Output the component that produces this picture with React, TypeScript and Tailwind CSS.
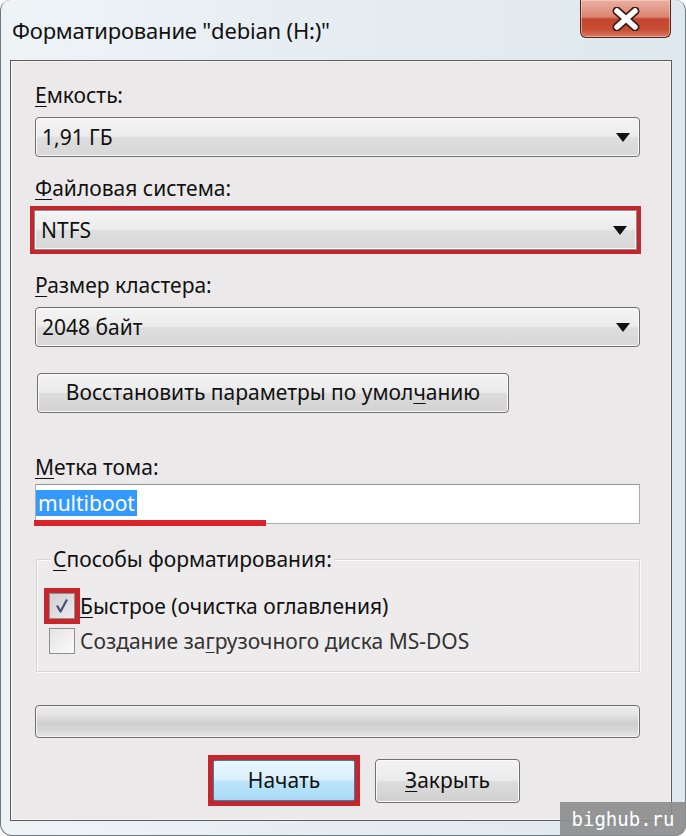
import React from "react";

const U = ({ children }: { children: React.ReactNode }) => (
  <span className="underline decoration-1 underline-offset-[3px]">{children}</span>
);

const Arrow = () => (
  <svg width="14" height="9" viewBox="0 0 14 9" className="shrink-0">
    <path d="M0 0 L14 0 L7 9 Z" fill="#111" />
  </svg>
);

const Combo = ({ text, className = "" }: { text: string; className?: string }) => (
  <div
    className={`flex items-center justify-between h-[40px] pl-[6px] pr-[9px] rounded-[4px] border border-[#6f6f6f] bg-[linear-gradient(#f4f4f4_0%,#ececec_48%,#dedede_52%,#d7d7d7_100%)] shadow-[inset_0_0_0_1px_#fafafa] ${className}`}
  >
    <span className="leading-none">{text}</span>
    <Arrow />
  </div>
);

export default function App() {
  return (
    <div
      className="relative w-[686px] h-[836px] overflow-hidden bg-white text-[#111]"
      style={{ fontFamily: '"Noto Sans", "Open Sans", sans-serif' }}
    >
      {/* window frame */}
      <div className="absolute inset-0 rounded-t-[10px] rounded-b-[12px] border border-[#6c7780] border-t-0 bg-[linear-gradient(90deg,#eef3f6_0%,#e4ecf1_60%,#dfe8ee_100%)]" />
      <div className="relative flex flex-col h-full">
        {/* title bar */}
        <div className="flex items-start h-[60px]">
          <div className="pl-[12px] pt-[15px] text-[22px] leading-[30px] tracking-[-0.2px]">
            Форматирование "debian (H:)"
          </div>
          <div className="ml-auto mr-[15px] w-[91px] h-[38px] rounded-b-[6px] border border-t-0 border-[#4f2820] bg-[linear-gradient(#eab0a2_0%,#dc8672_45%,#c4452d_52%,#c94d35_80%,#dc7a62_100%)] flex items-center justify-center shadow-[inset_0_0_0_1px_rgba(255,220,210,0.5)]">
            <svg width="30" height="24" viewBox="0 0 30 24">
              <path d="M6 4 L24 20 M24 4 L6 20" stroke="#3a1c16" strokeWidth="9" strokeLinecap="round" />
              <path d="M6 4 L24 20 M24 4 L6 20" stroke="#ffffff" strokeWidth="5.5" strokeLinecap="round" />
            </svg>
          </div>
        </div>

        {/* main panel */}
        <div className="ml-[10px] mr-[14px] h-[761px] border border-[#5a5a5a] bg-[#ebe9ea] shadow-[inset_0_0_0_1px_#f7f7f7] flex flex-col pl-[24px] pr-[31px] text-[21px]">
          <div className="mt-[22px] h-[24px] leading-[24px]"><U>Е</U>мкость:</div>
          <Combo text="1,91 ГБ" className="mt-[10px]" />

          <div className="mt-[19px] h-[24px] leading-[24px]"><U>Ф</U>айловая система:</div>
          <div className="mt-[6px] -ml-[5px] -mr-[1px] border-[4px] border-[#c3262c] p-0">
            <Combo text="NTFS" className="rounded-none border-[#8a8a8a]" />
          </div>

          <div className="mt-[19px] h-[24px] leading-[24px]"><U>Р</U>азмер кластера:</div>
          <Combo text="2048 байт" className="mt-[10px]" />

          <div className="mt-[26px] ml-[2px] w-[472px] h-[40px] rounded-[4px] border border-[#707070] bg-[linear-gradient(#f3f3f3_0%,#ebebeb_48%,#dcdcdc_52%,#d2d2d2_100%)] shadow-[inset_0_0_0_1px_#fbfbfb] flex items-center justify-center">
            <span>Восстановить параметры по умол<U>ч</U>анию</span>
          </div>

          <div className="mt-[42px] h-[24px] leading-[24px]"><U>М</U>етка тома:</div>
          <div className="relative mt-[5px] h-[40px] bg-white border border-[#a9aeb5] border-t-[#8e959c]">
            <div className="absolute left-[0px] top-[5px] h-[26px] px-[2px] bg-[#3399ff] text-white leading-[26px]">
              multiboot
            </div>
            <div className="absolute -left-[2px] top-[35px] w-[232px] h-[6px] bg-[#d8232a]" />
          </div>

          {/* group box */}
          <div className="relative mt-[35px] ml-[1px] h-[113px] border border-[#d6d6d6] shadow-[inset_1px_1px_0_#fafafa,1px_1px_0_#fafafa] bg-[#edebec]">
            <div className="absolute left-[14px] -top-[14px] px-[2px] bg-[#ebe9ea] leading-[26px]">
              <U>С</U>пособы форматирования:
            </div>
            <div className="flex flex-col pt-[28px] pl-[7px]">
              <div className="flex items-center h-[36px]">
                <div className="w-[36px] h-[36px] bg-[#c9252c] flex items-center justify-center shrink-0">
                  <div className="w-[26px] h-[26px] border border-[#8e8f8f] bg-[linear-gradient(135deg,#cfcfd3,#ececef)] flex items-center justify-center">
                    <svg width="18" height="18" viewBox="0 0 18 18">
                      <path d="M4 8.5 L7.5 14.5 L14 2.5" stroke="#4a5575" strokeWidth="2.3" fill="none" strokeLinejoin="round" />
                    </svg>
                  </div>
                </div>
                <span className="leading-none">
                  <U>Б</U>ыстрое (очистка оглавления)
                </span>
              </div>
              <div className="flex items-center h-[30px] mt-[2px]">
                <div className="ml-[5px] mr-[5px] w-[26px] h-[26px] border border-[#8f8f8f] bg-[linear-gradient(135deg,#e3e3e3,#fbfbfb)] shrink-0" />
                <span className="leading-none text-[#333]">
                  Создание за<U>г</U>рузочного диска MS-DOS
                </span>
              </div>
            </div>
          </div>

          {/* progress bar */}
          <div className="mt-[33px] h-[33px] rounded-[4px] border border-[#6e6e6e] bg-[linear-gradient(#eeeeee_0%,#e2e2e2_30%,#cfcfcf_55%,#d8d8d8_80%,#e6e6e6_100%)] shadow-[inset_0_0_0_1px_#f5f5f5]" />

          {/* buttons */}
          <div className="mt-[17px] flex items-start">
            <div className="ml-[173px] w-[152px] h-[51px] bg-[#c3262c] p-[5px]">
              <div className="h-full rounded-[2px] border border-[#3c7fb1] bg-[linear-gradient(#eaf6fd_0%,#d9effc_48%,#bee6fd_52%,#a7d9f5_100%)] flex items-center justify-center">
                Начать
              </div>
            </div>
            <div className="ml-[15px] mt-[4px] w-[145px] h-[44px] rounded-[4px] border border-[#707070] bg-[linear-gradient(#f3f3f3_0%,#ebebeb_48%,#dddddd_52%,#cfcfcf_100%)] shadow-[inset_0_0_0_1px_#fbfbfb] flex items-center justify-center">
              <span><U>З</U>акрыть</span>
            </div>
          </div>
        </div>
      </div>

      {/* watermark */}
      <div className="absolute right-0 bottom-0 w-[126px] h-[34px] bg-[#8c8c8c]/90 rounded-br-[10px] flex items-center justify-center">
        <span
          className="text-white text-[19px] leading-none"
          style={{ fontFamily: '"DejaVu Sans Mono", monospace' }}
        >
          bighub.ru
        </span>
      </div>
    </div>
  );
}
